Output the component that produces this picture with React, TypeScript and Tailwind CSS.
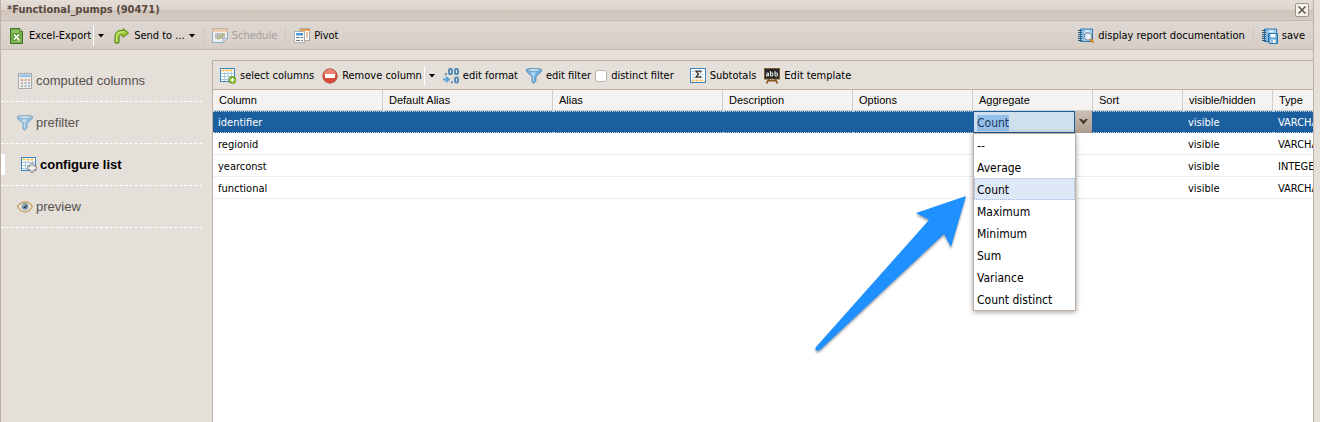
import { useEffect, useRef, type ReactNode } from "react";

const icon = "h-4 w-4 shrink-0";

function ExcelIcon() {
  return (
    <svg viewBox="0 0 16 16" className={icon}>
      <path d="M1.5.5h9l3 3v12h-12z" fill="#5f9a36" stroke="#3f7422" />
      <path d="M2.500 1.500h7.500v3h2.500v10h-10z" fill="#8cbf63" />
      <path d="M10.500.5v3h3z" fill="#e3f3d4" stroke="#3f7422" strokeWidth=".7" />
      <rect x="3.500" y="5" width="8" height="8" fill="#5f9a36" />
      <path d="M5 6.500l5 5M10 6.500l-5 5" stroke="#fff" strokeWidth="1.600" />
      <path d="M8 12h3" stroke="#fff" />
    </svg>
  );
}

function SendIcon() {
  return (
    <svg viewBox="0 0 16 16" className={icon}>
      <path
        d="M1 15V9c0-4 2-6.500 6-6.500h2V.6L14.500 5 9 9.200V7H7.500C5.500 7 5 8 5 10v5z"
        fill="#9fca3c"
        stroke="#517f12"
        strokeLinejoin="round"
      />
      <path d="M2.500 14V9c0-3 1.500-5 4.500-5h3" fill="none" stroke="#d9ef8c" />
    </svg>
  );
}

function ScheduleIcon() {
  return (
    <svg viewBox="0 0 16 16" className={`${icon} opacity-60`}>
      <path d="M.5.5h15v10l-4 4H.5z" fill="#fff" stroke="#5c9ccb" />
      <path d="M0 .5h16v3H0z" fill="#f2a65a" />
      <path d="M1.500 2h13" stroke="#fbe3c0" />
      <path d="M3 5h10v6H3z" fill="#c9ccd0" />
      <path d="M3 7h10M3 9h10M5.500 5v6M8 5v6M10.500 5v6" stroke="#8c939b" strokeWidth=".8" />
      <path d="M8 7.500h2v2H8zM5.500 9.500h2v2h-2zM10.500 5.500h2v2h-2z" fill="#8db600" />
      <path d="M11 15v-4.500h4.500z" fill="#cfe4f4" stroke="#5c9ccb" strokeWidth=".8" />
    </svg>
  );
}

function PivotIcon() {
  return (
    <svg viewBox="0 0 16 16" className={icon}>
      <rect x="6" y=".5" width="9.500" height="12" fill="#fff" stroke="#a9a9a9" />
      <path d="M6 1h9.500v2H6z" fill="#f2a04b" />
      <path d="M12 5h2M12 7h2M12 9h2" stroke="#e08a36" />
      <rect x=".5" y="3.500" width="10" height="11" fill="#fff" stroke="#a9b4bf" />
      <path d="M2 5h7v2.500H2z" fill="#4b97da" />
      <path d="M2 9.500h4M7 9.500h2M2 12.500h4M7 12.500h2" stroke="#6d7680" />
    </svg>
  );
}

function Binding() {
  return (
    <>
      <path d="M2.500 1h12v12.500h-12z" fill="#a9d3ef" stroke="#2f76ab" />
      <path d="M5 1v12.500" stroke="#5c9fce" />
      <path d="M0 2.500h4M0 4.500h4M0 6.500h4M0 8.500h4M0 10.500h4M0 12.500h4" stroke="#27597f" />
      <path d="M8 3h3" stroke="#fff" />
    </>
  );
}

function DocIcon() {
  return (
    <svg viewBox="0 0 16 16" className={icon}>
      <Binding />
      <circle cx="10" cy="8.500" r="3.600" fill="#e5f3fc" stroke="#8796a2" strokeWidth="1.200" />
      <path d="M13 12l1.800 2" stroke="#e08a1e" strokeWidth="2.400" strokeLinecap="round" />
    </svg>
  );
}

function SaveIcon() {
  return (
    <svg viewBox="0 0 16 16" className={icon}>
      <Binding />
      <path d="M6.500 5.500h9v10h-8l-1-1z" fill="#58a3de" stroke="#2f76ab" />
      <path d="M8.500 6h5v3.500h-5zM8.500 11.500h5v3.500h-5z" fill="#fff" />
      <path d="M10 12v3" stroke="#2f76ab" />
    </svg>
  );
}

function CalculatorIcon() {
  return (
    <svg viewBox="0 0 16 16" className={icon}>
      <rect x="1.500" y=".5" width="13" height="15" fill="#edebe8" stroke="#a9a9a9" />
      <path d="M2.500 1.500h11v2.500h-11z" fill="#8fc0e8" />
      <path d="M4 7h2M7.500 7h2M4 10h2M7.500 10h2M4 13h2M7.500 13h2" stroke="#a8a8a8" strokeWidth="1.500" />
      <path d="M4 7h2M11 7h2" stroke="#ec9467" strokeWidth="1.500" />
      <path d="M11 10h2M11 13h2" stroke="#7faddd" strokeWidth="1.500" />
    </svg>
  );
}

function FunnelIcon({ faded = false }: { faded?: boolean }) {
  return (
    <svg viewBox="0 0 16 16" className={faded ? `${icon} opacity-70` : icon}>
      <path d="M.5 1.500c0-1.300 15-1.300 15 0v2l-5.500 5v4.500l-2.500 2.500-1.500-1.500V8.500l-5.500-5z" fill="#6fb0e2" stroke="#4784b5" strokeWidth=".8" />
      <path d="M4 4.500h6L8 8v6l-1-1V8z" fill="#b9dcf5" />
      <ellipse cx="8" cy="2" rx="6.500" ry="1.200" fill="#dcebf6" stroke="#6a93b3" strokeWidth=".6" />
    </svg>
  );
}

function TableBase() {
  return (
    <>
      <rect x=".5" y=".5" width="14" height="13" fill="#fff" stroke="#3b86bd" />
      <path d="M1.500 2.500h12" stroke="#f3c25c" strokeWidth="2" strokeDasharray="3 1" />
      <path d="M1 5.500h13M1 8.500h13M1 11.500h13M4.500 4v9M8 4v9M11.500 4v9" stroke="#a8c9e2" />
    </>
  );
}

function SelectColumnsIcon() {
  return (
    <svg viewBox="0 0 16 16" className={icon}>
      <TableBase />
      <circle cx="12.300" cy="12" r="3.500" fill="#7fb41a" stroke="#5d8d0c" strokeWidth=".7" />
      <path d="M12.300 9.800v4.400M10.100 12h4.400" stroke="#fff" strokeWidth="1.300" />
    </svg>
  );
}

function ConfigureIcon() {
  return (
    <svg viewBox="0 0 16 16" className={icon}>
      <TableBase />
      <path
        d="M8.500 8h1.500V6.500h2V8h2v1.500h1.600v3H14V14h-2v1.500h-2V14H8.500v-1.500H6.500v-3h2z"
        fill="#d8d8d8"
        stroke="#85898c"
        strokeWidth=".8"
      />
      <path d="M8.500 11h5.500" stroke="#fff" strokeWidth="1.500" />
    </svg>
  );
}

function RemoveIcon() {
  return (
    <svg viewBox="0 0 16 16" className={icon}>
      <circle cx="8" cy="8" r="7.200" fill="#da4a38" stroke="#b0402f" strokeWidth=".8" />
      <path d="M2 7a6 6 0 0 1 12 0z" fill="#ea8574" />
      <rect x="3" y="6" width="10" height="4" rx=".5" fill="#fff" />
    </svg>
  );
}

function FormatIcon() {
  return (
    <svg viewBox="0 0 16 16" className={icon} fill="none" stroke="#4c86b6" strokeWidth="1.800">
      <rect x="6" y="1" width="3" height="5.200" rx="1.300" />
      <rect x="12" y="1" width="3" height="5.200" rx="1.300" />
      <rect x="12" y="9.300" width="3" height="5.200" rx="1.300" />
      <path d="M2 6.200h1.800M8 14.200h1.800" strokeWidth="2" />
      <path d="M0 11.500h5M3 8.800l3 2.700-3 2.700" stroke="#5ba0d6" />
    </svg>
  );
}

function SubtotalsIcon() {
  return (
    <svg viewBox="0 0 16 16" className={icon}>
      <rect x=".5" y=".5" width="15" height="14" fill="#fff" stroke="#3b86bd" />
      <path d="M2 3.500h12M2 6.500h12M2 9.500h12" stroke="#8fbde0" strokeDasharray="2 1" />
      <path d="M1.500 12.500h13" stroke="#f3c25c" strokeWidth="2" strokeDasharray="3 1" />
      <path d="M4.500 2h7v8.500h-7z" fill="#eee" />
      <path d="M10.500 4.500V3.200H6L8.500 6.200 6 9.200h4.500V8" fill="none" stroke="#333" strokeWidth="1.300" />
    </svg>
  );
}

function TemplateIcon() {
  return (
    <svg viewBox="0 0 16 16" className={icon}>
      <path d="M5 11l-2.500 4.500M11 11l2.500 4.500M3.500 12.800h9" stroke="#8a5a1c" strokeWidth="1.600" />
      <rect x=".5" y=".5" width="15" height="10.500" fill="#262626" stroke="#7c5a2b" />
      <g fill="none" stroke="#fff" strokeWidth=".9">
        <path d="M2.500 5h2v3h-2V6.500h2M6.500 3v5h2.300V5H6.500M11 3v5h2.300V5H11" />
      </g>
    </svg>
  );
}

function EyeIcon() {
  return (
    <svg viewBox="0 0 16 16" className={icon}>
      <path d="M.6 7.500C3 4 5.500 3 8 3s5 1 7.400 4.500C13 11.500 10.500 12.700 8 12.700S3 11.500.6 7.500z" fill="#f3ece0" stroke="#c6a265" strokeWidth="1.400" />
      <circle cx="8" cy="7.500" r="3.500" fill="#7d9db8" />
      <circle cx="8" cy="7.500" r="1.700" fill="#3d4a56" />
      <circle cx="7" cy="6.500" r=".8" fill="#fff" />
    </svg>
  );
}

function Caret() {
  return (
    <svg viewBox="0 0 6 4" className="h-1 w-1.5 shrink-0">
      <path d="M0 0h6L3 3.500z" fill="#000" />
    </svg>
  );
}

function ToolButton({ children, disabled = false }: { children: ReactNode; disabled?: boolean }) {
  return (
    <button type="button" disabled={disabled} className="flex items-center gap-1 whitespace-nowrap disabled:text-[#a5a09b]">
      {children}
    </button>
  );
}

function Divider() {
  return <span className="mx-2 h-4 w-px bg-[#cfc6be]" />;
}

function MenuButton({ label }: { label: string }) {
  return (
    <button type="button" aria-label={label} className="ml-0.5 flex h-5 items-center border-l border-white pl-1">
      <Caret />
    </button>
  );
}

const steps = [
  { label: "computed columns", icon: <CalculatorIcon /> },
  { label: "prefilter", icon: <FunnelIcon faded /> },
  { label: "configure list", icon: <ConfigureIcon />, active: true },
  { label: "preview", icon: <EyeIcon /> },
];

const columns = [
  { label: "Column", width: "w-[170px]" },
  { label: "Default Alias", width: "w-[170px]" },
  { label: "Alias", width: "w-[170px]" },
  { label: "Description", width: "w-[130px]" },
  { label: "Options", width: "w-[120px]" },
  { label: "Aggregate", width: "w-[120px]" },
  { label: "Sort", width: "w-[90px]" },
  { label: "visible/hidden", width: "w-[90px]" },
  { label: "Type", width: "w-[90px]" },
];

const rows = [
  { name: "identifier", type: "VARCHAR", selected: true },
  { name: "regionid", type: "VARCHAR" },
  { name: "yearconst", type: "INTEGER" },
  { name: "functional", type: "VARCHAR" },
];

const aggregates = ["--", "Average", "Count", "Maximum", "Minimum", "Sum", "Variance", "Count distinct"];

function AggregatePicker() {
  const input = useRef<HTMLInputElement>(null);
  useEffect(() => {
    input.current?.focus();
    input.current?.select();
  }, []);
  return (
    <div className="relative flex h-[22px] text-[12px]">
      <input
        ref={input}
        aria-label="Aggregate"
        role="combobox"
        aria-expanded="true"
        aria-controls="aggregate-options"
        defaultValue="Count"
        className="w-[102px] border border-[#1b5f9f] bg-[#cfdfec] px-[3px] pt-0.5 text-black outline-none selection:bg-[#94bfea] selection:text-[#1c3a57]"
      />
      <button
        type="button"
        aria-label="Show options"
        className="flex w-[17px] items-center justify-center bg-linear-to-b from-[#cbbfb4] to-[#ad9c8e]"
      >
        <svg viewBox="0 0 9 6" className="h-1.5 w-[9px]">
          <path d="M0 0h2.500l2 2 2-2H9L4.500 5.500z" fill="#43362b" />
        </svg>
      </button>
      <ul
        id="aggregate-options"
        role="listbox"
        className="absolute top-[22px] left-0 z-10 w-[103px] border border-[#bfb0a3] bg-white text-black shadow-[0_1px_5px_rgba(0,0,0,0.4)]"
      >
        {aggregates.map((name) => (
          <li
            key={name}
            role="option"
            aria-selected={name === "Count"}
            className="h-[22px] border border-dotted border-transparent px-[2px] leading-[22px] aria-selected:border-[#9fb8e6] aria-selected:bg-[#dfe8f6]"
          >
            {name}
          </li>
        ))}
      </ul>
    </div>
  );
}

export default function App() {
  return (
    <div className="flex min-h-screen bg-[#e4dfd9] pr-1.5 font-['DejaVu_Sans_Condensed','Noto_Sans',sans-serif] text-[11px] leading-4 text-black">
      <main className="relative flex min-w-0 flex-1 flex-col border-x border-[#bfb0a3]">
        <header className="flex h-[21px] items-center justify-between border-b border-[#c4b8ad] bg-[linear-gradient(#e4ddd7_0%,#ddd5ce_48%,#cec4ba_50%,#d5ccc3_100%)] pr-1 pl-1.5">
          <h1 className="font-bold text-[#594a3e]">*Functional_pumps (90471)</h1>
          <button
            type="button"
            aria-label="Close"
            className="flex h-3.5 w-3.5 items-center justify-center rounded-xs border border-[#a0958b] bg-[#f5f1ed]"
          >
            <svg viewBox="0 0 8 8" className="h-2 w-2">
              <path d="M.5.5l7 7M7.500.5l-7 7" stroke="#5f5145" strokeWidth="1.500" />
            </svg>
          </button>
        </header>

        <div className="flex h-[29px] items-center justify-between border-b border-[#c8bcb1] bg-linear-to-b from-[#dfd8d2] to-[#d6cdc6] pt-0.5 pr-2 pl-2">
          <div className="flex items-center">
            <div className="mr-2.5 flex items-center">
              <ToolButton>
                <ExcelIcon />
                Excel-Export
              </ToolButton>
              <MenuButton label="Export options" />
            </div>
            <ToolButton>
              <SendIcon />
              Send to ...
              <Caret />
            </ToolButton>
            <Divider />
            <ToolButton disabled>
              <ScheduleIcon />
              Schedule
            </ToolButton>
            <Divider />
            <ToolButton>
              <PivotIcon />
              Pivot
            </ToolButton>
          </div>
          <div className="flex items-center">
            <ToolButton>
              <DocIcon />
              display report documentation
            </ToolButton>
            <Divider />
            <ToolButton>
              <SaveIcon />
              save
            </ToolButton>
          </div>
        </div>

        <div className="flex min-h-0 flex-1 pt-2.5">
          <nav className="w-[211px] shrink-0 pr-2.5 font-['Liberation_Sans',sans-serif] text-[13px]">
            {steps.map((step) => (
              <a
                key={step.label}
                href="#"
                aria-current={step.active ? "step" : undefined}
                className="group flex h-[42px] items-center border-b border-dashed border-white text-[#57524d] aria-[current]:font-bold aria-[current]:text-black"
              >
                <span className="mr-3 h-[21px] w-1 group-aria-[current]:mr-4 group-aria-[current]:bg-white" />
                <span className="mr-[3px]">{step.icon}</span>
                {step.label}
              </a>
            ))}
          </nav>

          <section className="flex min-w-0 flex-1 flex-col border-t border-l border-[#bfb0a3] bg-white">
            <div className="flex h-[29px] items-center gap-2 border-b border-[#bfb0a3] bg-[#e4dfd9] px-[7px] pt-0.5">
              <ToolButton>
                <SelectColumnsIcon />
                select columns
              </ToolButton>
              <div className="flex items-center">
                <ToolButton>
                  <RemoveIcon />
                  Remove column
                </ToolButton>
                <MenuButton label="Remove options" />
              </div>
              <ToolButton>
                <FormatIcon />
                edit format
              </ToolButton>
              <div className="flex items-center gap-1">
                <ToolButton>
                  <FunnelIcon />
                  edit filter
                </ToolButton>
                <label className="mr-2 flex items-center gap-1 whitespace-nowrap">
                  <input type="checkbox" className="h-3 w-3 appearance-none rounded-[3px] border border-[#b5b0aa] bg-white" />
                  distinct filter
                </label>
              </div>
              <ToolButton>
                <SubtotalsIcon />
                Subtotals
              </ToolButton>
              <ToolButton>
                <TemplateIcon />
                Edit template
              </ToolButton>
            </div>
            <div className="flex-1 overflow-hidden">
              <table className="w-[1150px] table-fixed border-separate border-spacing-0 text-left">
                <thead>
                  <tr className="h-[21px] bg-[#f4f3f1] font-['Liberation_Sans',sans-serif]">
                    {columns.map((column) => (
                      <th
                        key={column.label}
                        scope="col"
                        className={`${column.width} border-r border-b border-[#d0cdca] px-1.5 py-0 font-normal whitespace-nowrap`}
                      >
                        {column.label}
                      </th>
                    ))}
                  </tr>
                </thead>
                <tbody>
                  {rows.map((row) => {
                    const cell = row.selected
                      ? "h-[22px] border-y border-dotted border-[#b9cfe6] bg-[#1b5f9f] p-0 text-white"
                      : "h-[22px] border-b border-[#ededed] p-0";
                    const textCell = `${cell} pt-0.5! pl-[5px]!`;
                    return (
                      <tr key={row.name}>
                        <td className={textCell}>{row.name}</td>
                        <td className={cell} />
                        <td className={cell} />
                        <td className={cell} />
                        <td className={cell} />
                        <td className={row.selected ? "h-[22px] bg-[#1b5f9f] p-0" : cell}>
                          {row.selected && <AggregatePicker />}
                        </td>
                        <td className={cell} />
                        <td className={textCell}>visible</td>
                        <td className={textCell}>{row.type}</td>
                      </tr>
                    );
                  })}
                </tbody>
              </table>
            </div>
          </section>
        </div>

        <svg
          viewBox="0 0 156 160"
          aria-hidden="true"
          className="pointer-events-none absolute top-[194px] left-[812px] h-[160px] w-[156px] drop-shadow-[0_2px_1px_rgba(0,0,0,0.35)]"
        >
          <path d="M153 2L103 19l13 7L3 153c-2 3 1 5 4 3l124-116 7 13z" fill="#1e90ff" />
        </svg>
      </main>
    </div>
  );
}
